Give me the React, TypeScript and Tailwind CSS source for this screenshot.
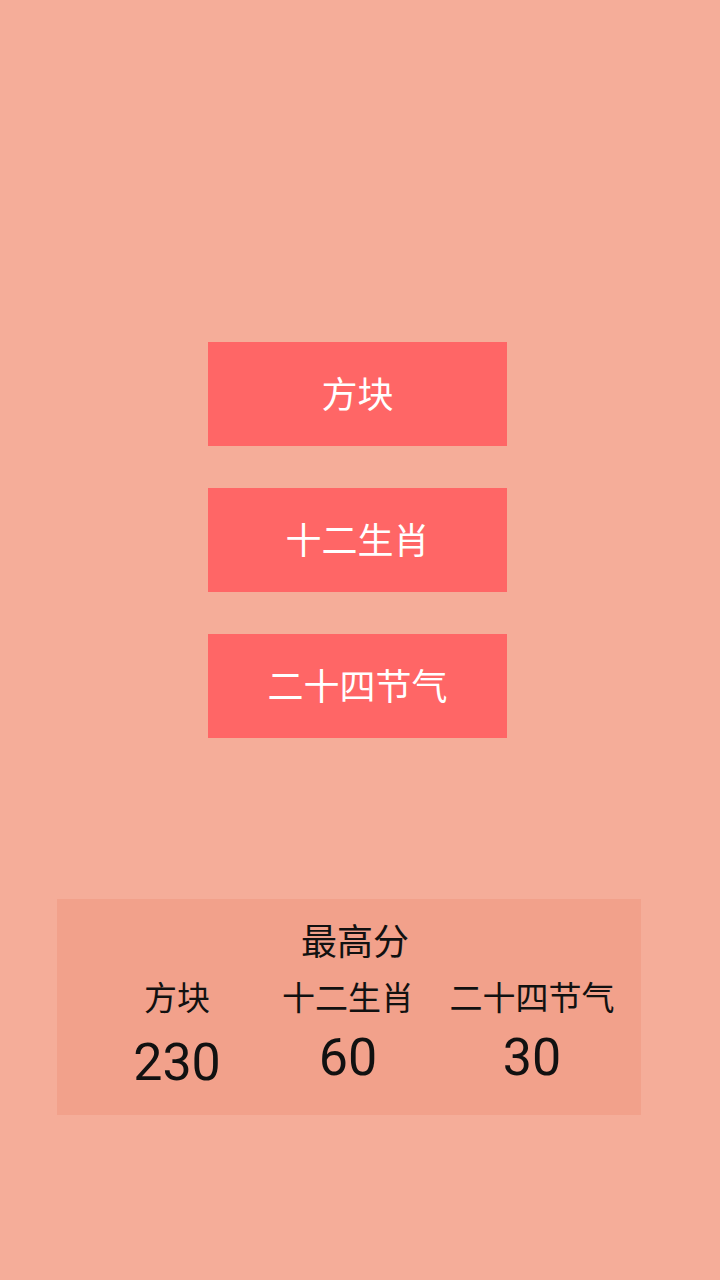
import React from 'react'

const cjk = { fontFamily: '"Noto Sans CJK SC", "Noto Sans", sans-serif' }
const num = { fontFamily: 'Roboto, "Noto Sans", sans-serif' }

const modes = ['方块', '十二生肖', '二十四节气']

const scores = [
  { label: '方块', score: 230, width: 'w-[128px]', offset: 'mt-[17px]' },
  { label: '十二生肖', score: 60, width: 'w-[214px]', offset: 'mt-[12px]' },
  { label: '二十四节气', score: 30, width: 'w-[154px]', offset: 'mt-[12px]' },
]

export default function App() {
  return (
    <div className="w-[720px] h-[1280px] bg-[#f5ad99] flex flex-col items-center" style={cjk}>
      {/* Mode buttons */}
      <div className="mt-[342px] flex flex-col gap-[42px] ml-[-5px]">
        {modes.map((m) => (
          <button
            key={m}
            className="w-[299px] h-[104px] pb-[5px] bg-[#ff6666] text-white text-[36px] font-normal flex items-center justify-center"
          >
            {m}
          </button>
        ))}
      </div>

      {/* High score panel */}
      <div className="self-start ml-[57px] mt-[161px] w-[584px] h-[216px] bg-[#f2a18b] flex flex-col">
        <div className="pl-[12px] pt-[20px] h-[60px] text-center text-[36px] leading-[40px] text-[#111]">
          最高分
        </div>
        <div className="flex pl-[56px]">
          {scores.map((s) => (
            <div key={s.label} className={`${s.width} flex flex-col items-center`}>
              <div className="mt-[17px] text-[33px] leading-[40px] whitespace-nowrap text-[#111]">{s.label}</div>
              <div className={`${s.offset} text-[52px] leading-[60px] text-[#111]`} style={num}>
                {s.score}
              </div>
            </div>
          ))}
        </div>
      </div>
    </div>
  )
}
